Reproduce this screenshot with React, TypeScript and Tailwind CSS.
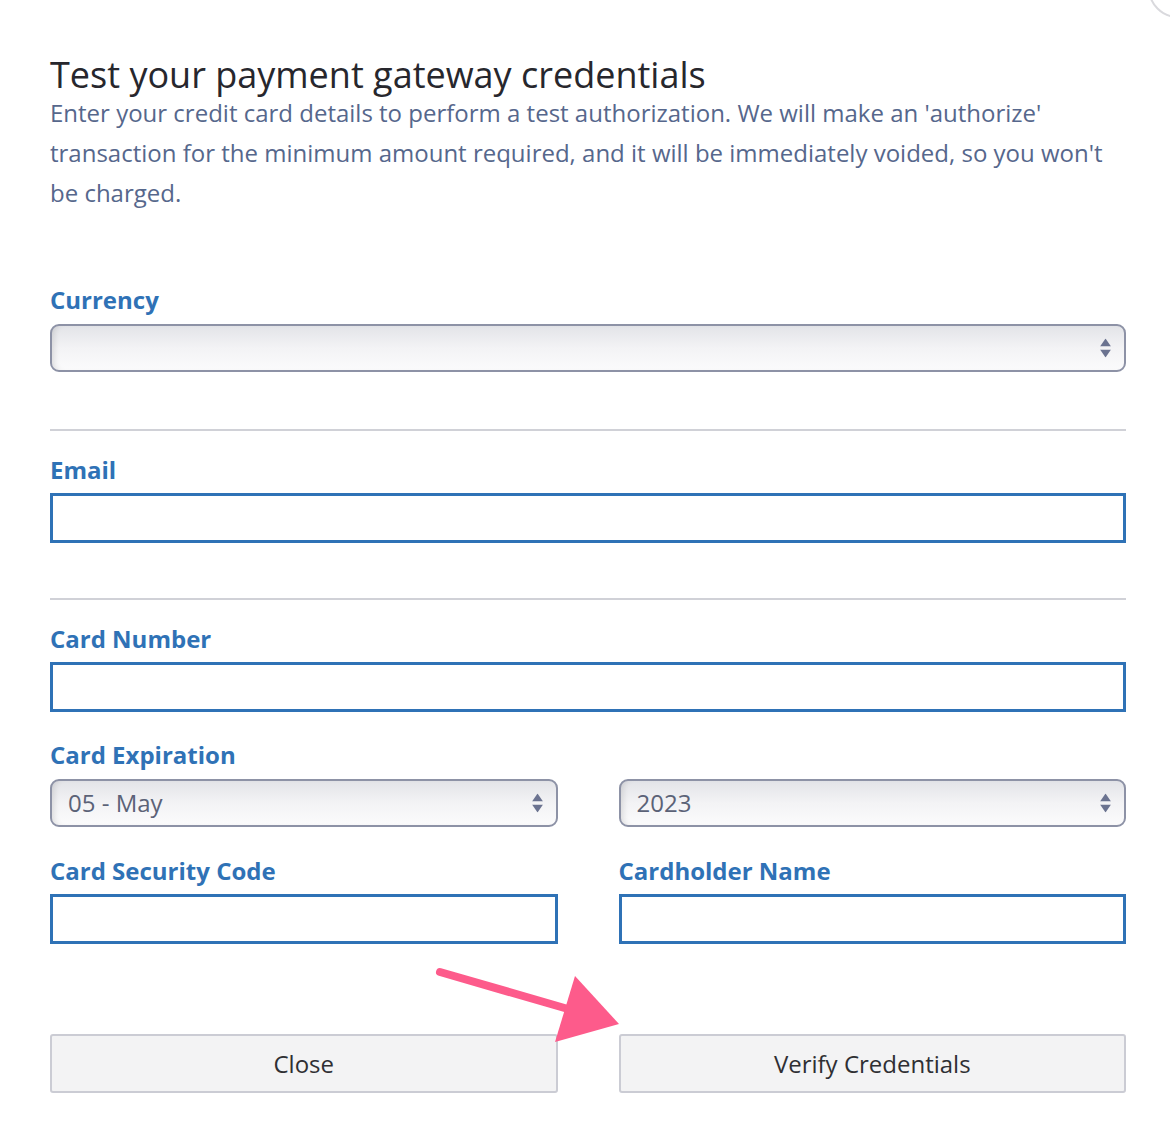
import React from "react";

const font = { fontFamily: '"Open Sans", "Noto Sans", sans-serif' };

function Arrows() {
  return (
    <span className="absolute right-[13px] top-1/2 -translate-y-1/2 flex flex-col items-center gap-[3px]">
      <svg width="11" height="8" viewBox="0 0 11 8">
        <path d="M5.5 0 L11 8 L0 8 Z" fill="#6b7390" />
      </svg>
      <svg width="11" height="8" viewBox="0 0 11 8">
        <path d="M0 0 L11 0 L5.5 8 Z" fill="#6b7390" />
      </svg>
    </span>
  );
}

function Select({ value }: { value?: string }) {
  return (
    <div className="relative h-[48px] w-full rounded-[9px] border-2 border-[#8d92a6] bg-gradient-to-b from-[#e3e4e8] via-[#f3f3f5] to-[#fbfbfc] shadow-[inset_6px_0_6px_-4px_rgba(0,0,0,0.12)] flex items-center pl-[16px]">
      {value && <span className="text-[24px] text-[#5b6277]">{value}</span>}
      <Arrows />
    </div>
  );
}

function Input() {
  return <div className="h-[50px] w-full border-[3px] border-[#2f72b6] bg-white" />;
}

function Label({ children }: { children: React.ReactNode }) {
  return <div className="text-[24px] leading-[32px] font-bold text-[#2f72b6]">{children}</div>;
}

export default function App() {
  return (
    <div className="relative w-[1170px] h-[1134px] bg-white overflow-hidden" style={font}>
      {/* close button edge */}
      <div className="absolute right-[-38px] top-[-42px] w-[60px] h-[60px] rounded-full border-2 border-[#d9d9dd] bg-white" />

      <div className="ml-[50px] w-[1076px] flex flex-col">
        <h1 className="mt-[57px] text-[36px] leading-[36px] text-[#27272d]">
          Test your payment gateway credentials
        </h1>
        <p className="text-[24px] leading-[40px] text-[#56678c]">
          Enter your credit card details to perform a test authorization. We will make an 'authorize'
          transaction for the minimum amount required, and it will be immediately voided, so you won't
          be charged.
        </p>

        <div className="mt-[71px]">
          <Label>Currency</Label>
          <div className="mt-[8px]">
            <Select />
          </div>
        </div>

        <div className="mt-[57px] h-[2px] bg-[#d0d1d7]" />

        <div className="mt-[23px]">
          <Label>Email</Label>
          <div className="mt-[7px]">
            <Input />
          </div>
        </div>

        <div className="mt-[55px] h-[2px] bg-[#d0d1d7]" />

        <div className="mt-[23px]">
          <Label>Card Number</Label>
          <div className="mt-[7px]">
            <Input />
          </div>
        </div>

        <div className="mt-[27px]">
          <Label>Card Expiration</Label>
          <div className="mt-[8px] grid grid-cols-2 gap-x-[61px]">
            <Select value="05 - May" />
            <Select value="2023" />
          </div>
        </div>

        <div className="mt-[28px] grid grid-cols-2 gap-x-[61px]">
          <div>
            <Label>Card Security Code</Label>
            <div className="mt-[7px]">
              <Input />
            </div>
          </div>
          <div>
            <Label>Cardholder Name</Label>
            <div className="mt-[7px]">
              <Input />
            </div>
          </div>
        </div>

        <div className="mt-[90px] grid grid-cols-2 gap-x-[61px]">
          <button className="h-[59px] rounded-[3px] border-2 border-[#cbccd4] bg-[#f3f3f4] text-[24px] text-[#2f2f33]">
            Close
          </button>
          <button className="h-[59px] rounded-[3px] border-2 border-[#cbccd4] bg-[#f3f3f4] text-[24px] text-[#2f2f33]">
            Verify Credentials
          </button>
        </div>
      </div>

      {/* pointer arrow */}
      <svg className="absolute left-0 top-0 pointer-events-none" width="1170" height="1134">
        <line x1="440" y1="972" x2="568" y2="1009" stroke="#fd5b8b" strokeWidth="8" strokeLinecap="round" />
        <polygon points="575,976 619,1024 555,1042" fill="#fd5b8b" />
      </svg>
    </div>
  );
}
